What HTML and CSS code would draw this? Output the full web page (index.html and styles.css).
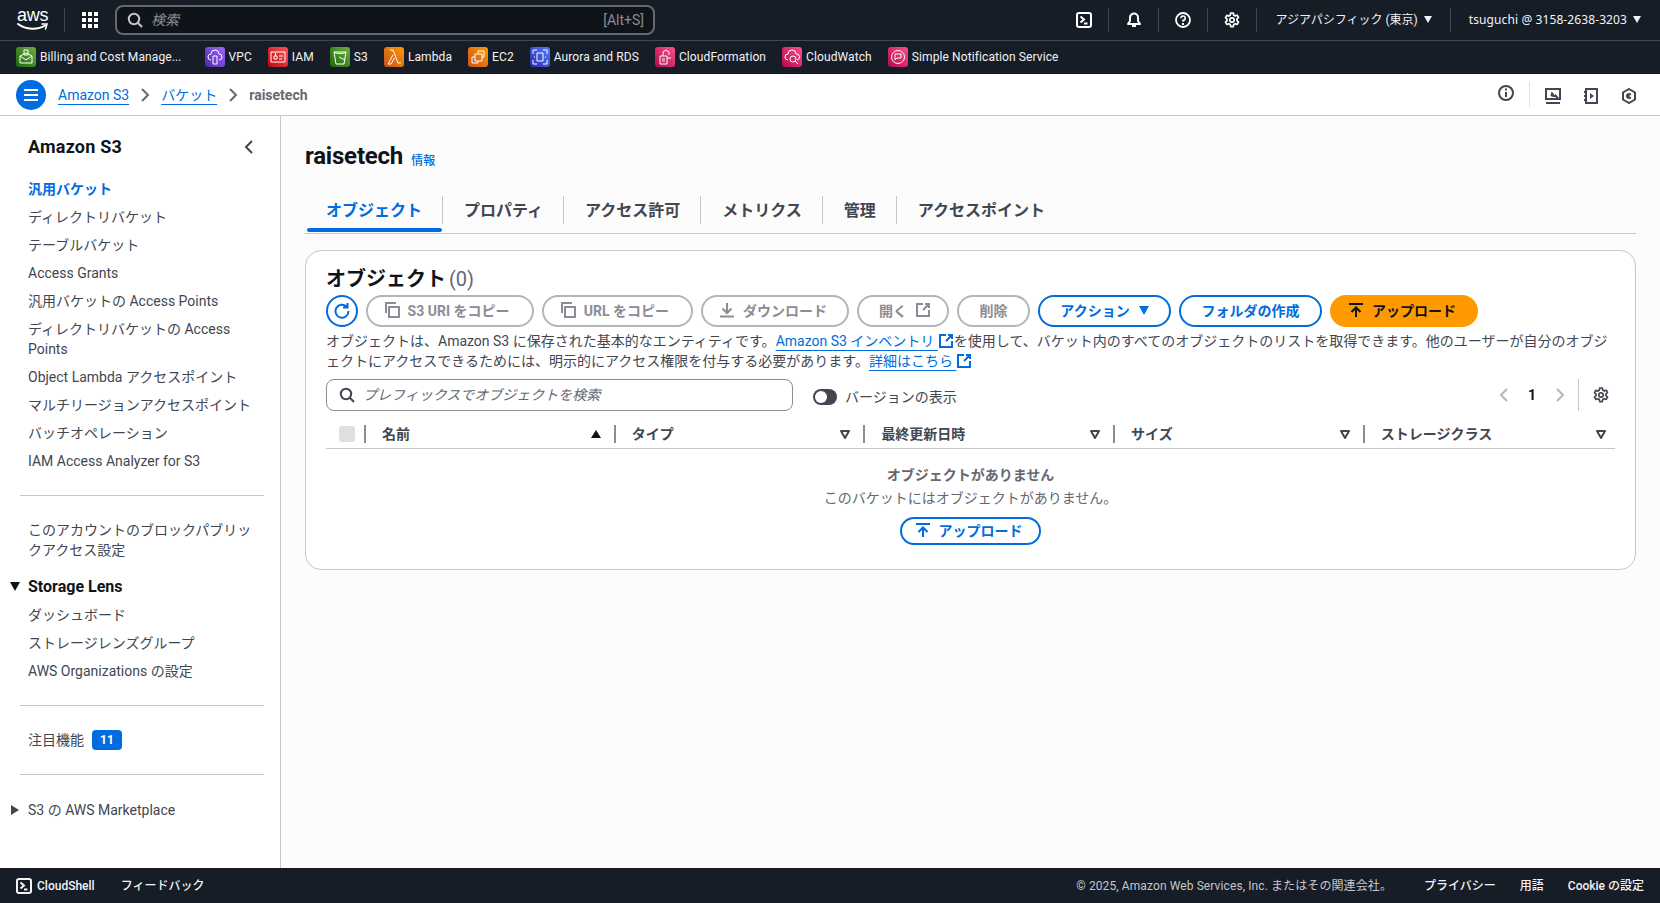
FILE: index.html
```html
<!DOCTYPE html>
<html lang="ja">
<head>
    <meta charset="UTF-8">
    <title>raisetech - S3 バケット</title>
    <link rel="stylesheet" href="styles.css">
</head>
<body>
    <!-- Shared icons -->
    <svg class="defs" width="0" height="0">
        <symbol id="i-gear" viewBox="0 0 16 16"><path d="M6.700 1h2.600l.4 2 1.500.9 2-.7 1.300 2.300-1.500 1.400v1.800l1.500 1.400-1.300 2.300-2-.7-1.500.9-.4 2H6.700l-.4-2-1.500-.9-2 .7-1.300-2.300 1.500-1.400V7.100L1.500 5.700l1.300-2.300 2 .7 1.500-.9z" fill="none" stroke="currentColor" stroke-width="1.700" stroke-linejoin="round"/><circle cx="8" cy="8" r="2.200" fill="none" stroke="currentColor" stroke-width="1.700"/></symbol>
        <symbol id="i-search" viewBox="0 0 16 16"><circle cx="7" cy="7" r="5.200" fill="none" stroke="currentColor" stroke-width="2"/><path d="M10.800 10.800 15 15" stroke="currentColor" stroke-width="2" fill="none"/></symbol>
        <symbol id="i-copy" viewBox="0 0 16 16"><path d="M5 5h10v10H5zM2 11V1h10" fill="none" stroke="currentColor" stroke-width="2"/></symbol>
        <symbol id="i-ext" viewBox="0 0 16 16"><path d="M8 2H2v12h12V8M10 2h4v4M14 2 8 8" fill="none" stroke="currentColor" stroke-width="2"/></symbol>
        <symbol id="i-upload" viewBox="0 0 16 16"><path d="M1 2h14" stroke="currentColor" stroke-width="2"/><path d="M8 15V6M3.500 10 8 5.500l4.500 4.500" fill="none" stroke="currentColor" stroke-width="2"/></symbol>
        <symbol id="i-download" viewBox="0 0 16 16"><path d="M1 14.500h14" stroke="currentColor" stroke-width="2"/><path d="M8 1v9M3.500 6.500 8 11l4.500-4.500" fill="none" stroke="currentColor" stroke-width="2"/></symbol>
        <symbol id="i-shell" viewBox="0 0 16 16"><rect x="1" y="1" width="14" height="14" rx="2" fill="none" stroke="currentColor" stroke-width="2"/><path d="m4.500 4.500 3.500 3-3.500 3M8 11.500h3.500" fill="none" stroke="currentColor" stroke-width="2"/></symbol>
        <symbol id="i-sort" viewBox="0 0 12 12"><path d="M2 3h8L6 10z" fill="none" stroke="currentColor" stroke-width="2" stroke-linejoin="round"/></symbol>
        <symbol id="i-crumb" viewBox="0 0 16 16"><path d="m5 2 6 6-6 6" fill="none" stroke="currentColor" stroke-width="2"/></symbol>
    </svg>

    <!-- Top navigation -->
    <header class="topnav">
        <div class="aws-logo">
            <span class="aws-word">aws</span>
            <svg width="32" height="8" viewBox="0 0 32 8"><path d="M1 1c8 6 20 6 27 1.500" fill="none" stroke="#fff" stroke-width="2" stroke-linecap="round"/><path d="M25 1h5l-1.500 5" fill="none" stroke="#fff" stroke-width="1.600" stroke-linecap="round"/></svg>
        </div>
        <span class="nav-sep logo-sep"></span>
        <svg class="apps" width="16" height="16" viewBox="0 0 16 16" fill="#fff"><path d="M0 0h4v4H0zM6 0h4v4H6zM12 0h4v4h-4zM0 6h4v4H0zM6 6h4v4H6zM12 6h4v4h-4zM0 12h4v4H0zM6 12h4v4H6zM12 12h4v4h-4z"/></svg>
        <div class="global-search">
            <svg class="ico16" viewBox="0 0 16 16"><use href="#i-search"/></svg>
            <span class="global-ph">検索</span>
            <span class="global-key">[Alt+S]</span>
        </div>
        <div class="nav-right">
            <svg class="ico16 nav-ico" viewBox="0 0 16 16"><use href="#i-shell"/></svg>
            <span class="nav-sep"></span>
            <svg class="ico16 nav-ico" viewBox="0 0 16 16"><path d="M8 1.500a4 4 0 0 1 4 4V9l2 3H2l2-3V5.500a4 4 0 0 1 4-4zM6 14h4" fill="none" stroke="currentColor" stroke-width="2" stroke-linejoin="round"/></svg>
            <span class="nav-sep"></span>
            <svg class="ico16 nav-ico" viewBox="0 0 16 16"><circle cx="8" cy="8" r="7" fill="none" stroke="currentColor" stroke-width="1.800"/><path d="M5.800 6.200A2.200 2.200 0 1 1 8 8.400v1.400" fill="none" stroke="currentColor" stroke-width="1.600"/><path d="M7 11h2v2H7z" fill="currentColor"/></svg>
            <span class="nav-sep"></span>
            <svg class="ico16 nav-ico" viewBox="0 0 16 16"><use href="#i-gear"/></svg>
            <span class="nav-sep"></span>
            <span class="nav-text region">アジアパシフィック (東京)<i class="caret"></i></span>
            <span class="nav-sep"></span>
            <span class="nav-text account">tsuguchi @ 3158-2638-3203<i class="caret"></i></span>
        </div>
    </header>

    <!-- Favorites -->
    <nav class="favbar">
        <a class="fav fav-wide"><svg class="svc g-green" viewBox="0 0 20 20"><path d="M4 9v7h12V9L10 13zM4 9l6-3 6 3M8 3h4v5H8z" fill="none" stroke="#fff"/></svg>Billing and Cost Manage...</a>
        <a class="fav"><svg class="svc g-purple" viewBox="0 0 20 20"><path d="M6 13a3 3 0 0 1 0-6 4 4 0 0 1 8 0 3 3 0 0 1 0 6M8 9h4v8H8z" fill="none" stroke="#fff"/></svg>VPC</a>
        <a class="fav"><svg class="svc g-red" viewBox="0 0 20 20"><path d="M3 5h14v10H3zM6 9h3v3H6zM7.500 6v3M11 9h4M11 12h3" fill="none" stroke="#fff"/></svg>IAM</a>
        <a class="fav"><svg class="svc g-green" viewBox="0 0 20 20"><path d="M4 5h12l-2 12H6zM4 5c2 2 10 2 12 0M9 10l6 3" fill="none" stroke="#fff"/></svg>S3</a>
        <a class="fav"><svg class="svc g-orange" viewBox="0 0 20 20"><path d="M6 3h3l5 13h3M9 8l-5 9h3l3.500-6" fill="none" stroke="#fff"/></svg>Lambda</a>
        <a class="fav"><svg class="svc g-orange" viewBox="0 0 20 20"><path d="M7 7h7v7H7zM10 7V4h6v6h-2M7 10H4v6h6v-2" fill="none" stroke="#fff"/></svg>EC2</a>
        <a class="fav"><svg class="svc g-blue" viewBox="0 0 20 20"><path d="M7 6h6v8H7zM3 7V3h4M13 3h4v4M17 13v4h-4M7 17H3v-4M4 10h1M15 10h1" fill="none" stroke="#fff"/></svg>Aurora and RDS</a>
        <a class="fav"><svg class="svc g-pink" viewBox="0 0 20 20"><path d="M5 9h7v8H5zM8 9V5l3-2 3 2v3M12 11h4M7 12h3M7 14h3" fill="none" stroke="#fff"/></svg>CloudFormation</a>
        <a class="fav"><svg class="svc g-pink" viewBox="0 0 20 20"><path d="M6 13a3 3 0 0 1 0-6 4 4 0 0 1 8 0 3 3 0 0 1 1 6" fill="none" stroke="#fff"/><circle cx="11" cy="12" r="3" fill="none" stroke="#fff"/><path d="m13 14 3 3" stroke="#fff"/></svg>CloudWatch</a>
        <a class="fav"><svg class="svc g-pink" viewBox="0 0 20 20"><circle cx="10" cy="10" r="6.500" fill="none" stroke="#fff"/><path d="M7 7h6v4H9l-2 2z" fill="none" stroke="#fff"/></svg>Simple Notification Service</a>
    </nav>

    <!-- Breadcrumbs -->
    <div class="crumbbar">
        <button class="burger"><span></span><span></span><span></span></button>
        <a class="link crumb-first">Amazon S3</a>
        <svg class="crumb-sep" viewBox="0 0 16 16"><use href="#i-crumb"/></svg>
        <a class="link">バケット</a>
        <svg class="crumb-sep" viewBox="0 0 16 16"><use href="#i-crumb"/></svg>
        <span class="crumb-now">raisetech</span>
        <div class="crumb-tools">
            <svg class="ico16 tool-info" viewBox="0 0 16 16"><circle cx="8" cy="8" r="7" fill="none" stroke="currentColor" stroke-width="2"/><path d="M7 7h2v5H7zM7 3.500h2v2H7z" fill="currentColor"/></svg>
            <span class="tool-sep"></span>
            <svg class="ico16 tool-first" viewBox="0 0 16 16"><path d="M1 11V1h14v10zM1 15h14M6 8l2.500-2.500M7.500 4.500a2 2 0 0 0 3 3l2.500 3" fill="none" stroke="currentColor" stroke-width="2"/></svg>
            <svg class="ico16 tool" viewBox="0 0 16 16"><path d="M3 1h11v14H3zM1 4h3M1 8h3M1 12h3" fill="none" stroke="currentColor" stroke-width="2"/><path d="M7 5v6l4-3z" fill="currentColor"/></svg>
            <svg class="ico16 tool" viewBox="0 0 16 16"><path d="m8 1 6 3.500v7L8 15l-6-3.500v-7z" fill="none" stroke="currentColor" stroke-width="2"/><path d="M10.500 6.500A3 3 0 1 0 10.500 9.500L8 8z" fill="currentColor"/></svg>
        </div>
    </div>

    <div class="layout">
        <!-- Side navigation -->
        <aside class="sidenav">
            <div class="side-head">
                <h2>Amazon S3</h2>
                <svg class="side-close" viewBox="0 0 16 16"><path d="m11 2-6 6 6 6" fill="none" stroke="currentColor" stroke-width="2"/></svg>
            </div>
            <ul class="side-list">
                <li class="active">汎用バケット</li>
                <li>ディレクトリバケット</li>
                <li>テーブルバケット</li>
                <li>Access Grants</li>
                <li>汎用バケットの Access Points</li>
                <li>ディレクトリバケットの Access Points</li>
                <li>Object Lambda アクセスポイント</li>
                <li>マルチリージョンアクセスポイント</li>
                <li>バッチオペレーション</li>
                <li>IAM Access Analyzer for S3</li>
            </ul>
            <hr class="side-div first-div">
            <ul class="side-list">
                <li>このアカウントのブロックパブリックアクセス設定</li>
            </ul>
            <div class="side-group"><i class="tri-down"></i>Storage Lens</div>
            <ul class="side-list group-list">
                <li>ダッシュボード</li>
                <li>ストレージレンズグループ</li>
                <li>AWS Organizations の設定</li>
            </ul>
            <hr class="side-div">
            <div class="side-feature">注目機能<span class="badge">11</span></div>
            <hr class="side-div feature-div">
            <div class="side-market"><i class="tri-right"></i>S3 の AWS Marketplace</div>
        </aside>

        <main class="content">
            <div class="page-title">
                <h1>raisetech</h1>
                <a class="info-link">情報</a>
            </div>

            <div class="tabs">
                <a class="tab active">オブジェクト</a>
                <a class="tab">プロパティ</a>
                <a class="tab">アクセス許可</a>
                <a class="tab">メトリクス</a>
                <a class="tab">管理</a>
                <a class="tab last">アクセスポイント</a>
            </div>

            <section class="card">
                <h2 class="card-title">オブジェクト <span class="count">(0)</span></h2>
                <div class="actions">
                    <button class="btn-round"><svg class="ico16" viewBox="0 0 16 16"><path d="M12.500 3.500A6.500 6.500 0 1 0 14.500 8M9 4.500h4.500V0" fill="none" stroke="currentColor" stroke-width="2"/></svg></button>
                    <button class="btn off btn-s3"><svg class="ico16" viewBox="0 0 16 16"><use href="#i-copy"/></svg>S3 URI をコピー</button>
                    <button class="btn off btn-url"><svg class="ico16" viewBox="0 0 16 16"><use href="#i-copy"/></svg>URL をコピー</button>
                    <button class="btn off btn-dl"><svg class="ico16" viewBox="0 0 16 16"><use href="#i-download"/></svg>ダウンロード</button>
                    <button class="btn off btn-open">開く<svg class="ico16" viewBox="0 0 16 16"><use href="#i-ext"/></svg></button>
                    <button class="btn off btn-del">削除</button>
                    <button class="btn blue btn-act">アクション<i class="caret big"></i></button>
                    <button class="btn blue btn-folder">フォルダの作成</button>
                    <button class="btn primary btn-up"><svg class="ico16" viewBox="0 0 16 16"><use href="#i-upload"/></svg>アップロード</button>
                </div>
                <p class="desc">オブジェクトは、Amazon S3 に保存された基本的なエンティティです。<a class="link">Amazon S3 インベントリ </a><svg class="ico16 ext" viewBox="0 0 16 16"><use href="#i-ext"/></svg>を使用して、バケット内のすべてのオブジェクトのリストを取得できます。他のユーザーが自分のオブジェクトにアクセスできるためには、明示的にアクセス権限を付与する必要があります。<a class="link">詳細はこちら </a><svg class="ico16 ext" viewBox="0 0 16 16"><use href="#i-ext"/></svg></p>

                <div class="filter-row">
                    <div class="filter">
                        <svg class="ico16" viewBox="0 0 16 16"><use href="#i-search"/></svg>
                        <span>プレフィックスでオブジェクトを検索</span>
                    </div>
                    <div class="toggle"><span class="knob"></span></div>
                    <span class="toggle-label">バージョンの表示</span>
                    <div class="pager">
                        <svg class="pager-arrow" viewBox="0 0 16 16"><path d="m11 2-6 6 6 6" fill="none" stroke="currentColor" stroke-width="2"/></svg>
                        <span class="pager-num">1</span>
                        <svg class="pager-arrow" viewBox="0 0 16 16"><path d="m5 2 6 6-6 6" fill="none" stroke="currentColor" stroke-width="2"/></svg>
                        <span class="pager-sep"></span>
                        <svg class="ico16 pager-gear" viewBox="0 0 16 16"><use href="#i-gear"/></svg>
                    </div>
                </div>

                <div class="thead">
                    <div class="th th-check"><span class="checkbox"></span></div>
                    <div class="th">名前<svg class="sort" viewBox="0 0 12 12"><path d="M1 10 6 2l5 8z" fill="#0f141a"/></svg></div>
                    <div class="th">タイプ<svg class="sort" viewBox="0 0 12 12"><use href="#i-sort"/></svg></div>
                    <div class="th">最終更新日時<svg class="sort" viewBox="0 0 12 12"><use href="#i-sort"/></svg></div>
                    <div class="th">サイズ<svg class="sort" viewBox="0 0 12 12"><use href="#i-sort"/></svg></div>
                    <div class="th">ストレージクラス<svg class="sort" viewBox="0 0 12 12"><use href="#i-sort"/></svg></div>
                </div>

                <div class="empty">
                    <strong>オブジェクトがありません</strong>
                    <p>このバケットにはオブジェクトがありません。</p>
                    <button class="btn blue btn-small"><svg class="ico16" viewBox="0 0 16 16"><use href="#i-upload"/></svg>アップロード</button>
                </div>
            </section>
        </main>
    </div>

    <!-- Footer -->
    <footer class="footer">
        <svg class="ico16" viewBox="0 0 16 16"><use href="#i-shell"/></svg>
        <span class="foot-shell">CloudShell</span>
        <span class="foot-feedback">フィードバック</span>
        <span class="foot-copy">© 2025, Amazon Web Services, Inc. またはその関連会社。</span>
        <span class="foot-link">プライバシー</span>
        <span class="foot-link">用語</span>
        <span class="foot-link">Cookie の設定</span>
    </footer>
</body>
</html>
```

FILE: styles.css
```css
* {
    box-sizing: border-box;
}
html, body {
    height: 100%;
}
body {
    margin: 0;
    display: flex;
    flex-direction: column;
    height: 903px;
    overflow: hidden;
    font-family: Roboto, "Noto Sans CJK JP", sans-serif;
    font-size: 14px;
    line-height: 20px;
    color: #424650;
    background-color: #fcfcfc;
}
a {
    color: inherit;
}
ul {
    list-style: none;
    margin: 0;
    padding: 0;
}
button {
    font-family: inherit;
}
.defs {
    position: absolute;
}
.ico16 {
    width: 16px;
    height: 16px;
    flex: none;
}
.link {
    color: #006ce0;
    text-decoration: underline;
    text-underline-offset: 4px;
}
.caret {
    display: inline-block;
    width: 0;
    height: 0;
    margin-left: 6px;
    border-left: 4px solid transparent;
    border-right: 4px solid transparent;
    border-top: 7px solid currentColor;
    vertical-align: 1px;
}

/* top nav */
.topnav {
    display: flex;
    align-items: center;
    height: 41px;
    padding-left: 17px;
    background-color: #161d26;
    border-bottom: 1px solid #424650;
    color: #fff;
}
.aws-logo {
    display: flex;
    flex-direction: column;
    width: 32px;
    margin-top: -2px;
}
.aws-word {
    font-family: "Liberation Sans", sans-serif;
    font-size: 18px;
    line-height: 14px;
    letter-spacing: -0.3px;
}
.aws-logo svg {
    margin-top: 1px;
}
.nav-sep {
    width: 1px;
    height: 24px;
    background-color: #424650;
}
.logo-sep {
    margin-left: 15px;
}
.apps {
    margin-left: 17px;
}
.global-search {
    display: flex;
    align-items: center;
    width: 540px;
    height: 30px;
    margin-left: 17px;
    padding: 0 9px 0 10px;
    background-color: #0f141a;
    border: 2px solid #656871;
    border-radius: 8px;
    color: #c6c6cd;
}
.global-ph {
    margin-left: 8px;
    font-style: italic;
    color: #8c8c94;
}
.global-key {
    margin-left: auto;
    color: #8c8c94;
}
.nav-right {
    display: flex;
    align-items: center;
    margin-left: auto;
    padding-right: 19px;
}
.nav-ico {
    margin: 0 16.2px;
    color: #fff;
}
.nav-text {
    font-size: 12px;
    white-space: nowrap;
    color: #f3f3f7;
}
.region {
    margin: 0 18px 0 18px;
}
.account {
    margin-left: 18px;
    letter-spacing: 0.1px;
    font-family: "Noto Sans", "Noto Sans CJK JP", sans-serif;
}

/* favorites */
.favbar {
    display: flex;
    align-items: center;
    height: 33px;
    padding-left: 16px;
    gap: 16px;
    background-color: #161d26;
    border-bottom: 1px solid #0f141a;
}
.fav {
    display: flex;
    align-items: center;
    gap: 4px;
    font-size: 12px;
    letter-spacing: 0.1px;
    white-space: nowrap;
    color: #f3f3f7;
}
.fav-wide {
    margin-right: 7px;
}
.svc {
    width: 20px;
    height: 20px;
    border-radius: 3px;
}
.g-green { background: linear-gradient(45deg, #1b660f, #6cae3e); }
.g-purple { background: linear-gradient(45deg, #4d27a8, #a166ff); }
.g-red { background: linear-gradient(45deg, #bd0816, #ff5252); }
.g-orange { background: linear-gradient(45deg, #c8511b, #ff9900); }
.g-blue { background: linear-gradient(45deg, #2e27ad, #527fff); }
.g-pink { background: linear-gradient(45deg, #b0084d, #ff4f8b); }

/* breadcrumbs */
.crumbbar {
    display: flex;
    align-items: center;
    height: 42px;
    padding-left: 16px;
    background-color: #fff;
    border-bottom: 1px solid #c6c6cd;
}
.burger {
    display: flex;
    flex-direction: column;
    align-items: center;
    justify-content: center;
    gap: 3px;
    width: 30px;
    height: 30px;
    padding: 0;
    border: 0;
    border-radius: 50%;
    background-color: #006ce0;
}
.burger span {
    width: 14px;
    height: 2px;
    background-color: #fff;
}
.crumb-first {
    margin-left: 12px;
}
.crumb-sep {
    width: 16px;
    height: 16px;
    margin: 0 8px;
    color: #656871;
}
.crumb-now {
    font-weight: 700;
    color: #656871;
}
.crumb-tools {
    display: flex;
    align-items: center;
    margin-left: auto;
    padding-right: 23px;
    color: #424650;
}
.tool-info {
    margin-top: -4px;
}
.tool-sep {
    width: 1px;
    height: 25px;
    margin: 0 15px 0 15px;
    background-color: #dedee3;
}
.tool-first {
    margin-top: 2px;
}
.tool {
    margin-top: 2px;
    margin-left: 22px;
}

/* layout */
.layout {
    flex: 1;
    display: flex;
    min-height: 0;
}
.sidenav {
    width: 281px;
    flex: none;
    padding-top: 21px;
    background-color: #fff;
    border-right: 1px solid #c6c6cd;
}
.side-head {
    display: flex;
    align-items: center;
    justify-content: space-between;
    padding: 0 23px 0 28px;
    height: 20px;
}
.side-head h2 {
    margin: 0;
    font-size: 18px;
    font-weight: 700;
    letter-spacing: 0.2px;
    color: #0f141a;
}
.side-close {
    width: 16px;
    height: 16px;
    color: #424650;
}
.side-list {
    margin-top: 22px;
    padding: 0 20px 0 28px;
}
.side-list li {
    margin-bottom: 8px;
}
.side-list li.active {
    font-weight: 700;
    color: #006ce0;
}
.side-div {
    margin: 14px 16px 0 20px;
    border: 0;
    border-top: 1px solid #c6c6cd;
}
.first-div {
    margin-top: 24px;
}
.first-div + .side-list {
    margin-top: 24px;
}
.side-group {
    position: relative;
    margin-top: 17px;
    padding-left: 28px;
    font-size: 16px;
    font-weight: 700;
    color: #0f141a;
}
.tri-down {
    position: absolute;
    left: 10px;
    top: 5px;
    border-left: 5px solid transparent;
    border-right: 5px solid transparent;
    border-top: 9px solid #0f141a;
}
.tri-right {
    position: absolute;
    left: 11px;
    top: 5px;
    border-top: 5px solid transparent;
    border-bottom: 5px solid transparent;
    border-left: 8px solid #424650;
}
.group-list {
    margin-top: 8px;
}
.group-list + .side-div {
    margin-top: 24px;
}
.side-feature {
    display: flex;
    align-items: center;
    height: 20px;
    margin-top: 24px;
    padding-left: 28px;
}
.badge {
    width: 30px;
    height: 20px;
    margin-left: 8px;
    border-radius: 4px;
    background-color: #006ce0;
    color: #fff;
    font-size: 12px;
    font-weight: 700;
    text-align: center;
}
.feature-div {
    margin-top: 24px;
}
.side-market {
    position: relative;
    margin-top: 25px;
    padding-left: 28px;
}

/* main */
.content {
    flex: 1;
    min-width: 0;
    padding: 24px 24px 0 24px;
}
.page-title {
    display: flex;
    align-items: baseline;
    height: 32px;
}
.page-title h1 {
    margin: 0;
    font-size: 24px;
    line-height: 32px;
    font-weight: 700;
    letter-spacing: -0.2px;
    color: #0f141a;
}
.info-link {
    position: relative;
    top: 1px;
    margin-left: 8px;
    font-size: 12px;
    font-weight: 500;
    color: #006ce0;
}
.tabs {
    display: flex;
    margin-top: 16px;
    padding: 8px 0 0 1px;
    height: 46px;
    border-bottom: 1px solid #c6c6cd;
}
.tab {
    position: relative;
    height: 28px;
    padding: 3px 20px 1px 21px;
    font-size: 16px;
    line-height: 24px;
    font-weight: 700;
    border-right: 1px solid #c6c6cd;
    color: #424650;
}
.tab.last {
    border-right: 0;
}
.tab.active {
    padding-left: 19px;
    margin-left: 1px;
    color: #006ce0;
}
.tab.active::after {
    content: "";
    position: absolute;
    left: 0;
    right: 0;
    bottom: -8px;
    height: 4px;
    border-radius: 2px;
    background-color: #006ce0;
}
.card {
    margin-top: 16px;
    height: 320px;
    padding: 15px 20px 0 20px;
    background-color: #fff;
    border: 1px solid #c6c6cd;
    border-radius: 16px;
}
.card-title {
    margin: 0;
    font-size: 20px;
    line-height: 26px;
    font-weight: 700;
    color: #0f141a;
}
.count {
    margin-left: -2px;
    font-weight: 400;
    color: #656871;
}
.actions {
    display: flex;
    gap: 8px;
    margin-top: 3px;
}
.btn-round {
    display: flex;
    align-items: center;
    justify-content: center;
    width: 32px;
    height: 32px;
    padding: 0;
    border: 2px solid #006ce0;
    border-radius: 50%;
    background-color: #fff;
    color: #006ce0;
}
.btn {
    display: flex;
    align-items: center;
    justify-content: center;
    gap: 8px;
    height: 32px;
    padding: 0 0 2px 0;
    border: 2px solid #006ce0;
    border-radius: 20px;
    background-color: #fff;
    color: #006ce0;
    font-size: 14px;
    font-weight: 700;
    white-space: nowrap;
}
.btn.off {
    border-color: #b4b4bb;
    color: #8c8c94;
}
.btn.primary {
    border-color: #ff9900;
    background-color: #ff9900;
    color: #0f141a;
}
.btn-s3 { width: 168px; padding-right: 7px; }
.btn-url { width: 151px; padding-right: 6px; }
.btn-dl { width: 148px; padding-right: 4px; }
.btn-open { width: 92px; padding-left: 4px; }
.btn-del { width: 73px; }
.btn-act { width: 133px; }
.btn-folder { width: 143px; }
.btn-up { width: 148px; padding-right: 4px; }
.caret.big {
    margin-left: 1px;
    border-left-width: 5px;
    border-right-width: 5px;
    border-top-width: 9px;
}
.desc {
    margin: 4px 0 0 0;
    color: #424650;
}
.ext {
    vertical-align: -3px;
    color: #006ce0;
}
.filter-row {
    display: flex;
    align-items: center;
    height: 32px;
    margin-top: 8px;
}
.filter {
    display: flex;
    align-items: center;
    gap: 8px;
    width: 467px;
    height: 32px;
    padding: 0 12px;
    border: 1px solid #8c8c94;
    border-radius: 8px;
    color: #424650;
}
.filter span {
    font-style: italic;
    color: #656871;
}
.toggle {
    width: 24px;
    height: 16px;
    margin: 4px 0 0 20px;
    padding: 2px;
    border-radius: 8px;
    background-color: #424650;
}
.knob {
    display: block;
    width: 12px;
    height: 12px;
    border-radius: 50%;
    background-color: #fff;
}
.toggle-label {
    margin: 4px 0 0 8px;
}
.pager {
    display: flex;
    align-items: center;
    height: 32px;
    margin-left: auto;
    padding-right: 6px;
}
.pager-arrow {
    width: 16px;
    height: 16px;
    color: #b4b4bb;
}
.pager-num {
    margin: 0 16px;
    font-weight: 700;
    color: #0f141a;
}
.pager-sep {
    width: 1px;
    height: 32px;
    margin: 0 14px 0 10px;
    background-color: #c6c6cd;
}
.pager-gear {
    color: #424650;
}
.thead {
    display: grid;
    grid-template-columns: 38px repeat(5, 249.7px);
    height: 26px;
    margin-top: 12px;
    padding-top: 2px;
    border-bottom: 1px solid #c6c6cd;
}
.th {
    display: flex;
    align-items: center;
    justify-content: space-between;
    height: 18px;
    padding: 0 0 0 16px;
    font-weight: 700;
    color: #424650;
    border-left: 2px solid #8c8c94;
}
.th:first-child {
    border-left: 0;
    padding-left: 13px;
}
.th:last-child .sort {
    margin-right: 5px;
}
.sort {
    width: 12px;
    height: 12px;
    margin-right: 12px;
    color: #424650;
}
.checkbox {
    width: 16px;
    height: 16px;
    border-radius: 3px;
    background-color: #dedee3;
}
.empty {
    display: flex;
    flex-direction: column;
    align-items: center;
    margin-top: 16px;
    color: #656871;
}
.empty strong {
    font-weight: 700;
}
.empty p {
    margin: 3px 0 0 0;
}
.btn-small {
    width: 141px;
    height: 28px;
    margin-top: 9px;
    padding-right: 4px;
}

/* footer */
.footer {
    display: flex;
    align-items: center;
    height: 35px;
    padding: 0 16px 0 16px;
    background-color: #161d26;
    color: #f3f3f7;
    font-size: 12px;
}
.foot-shell {
    margin-left: 5px;
    font-weight: 500;
}
.foot-feedback {
    margin-left: 26px;
    font-weight: 500;
}
.foot-copy {
    margin-left: auto;
    margin-right: 8px;
    letter-spacing: 0.1px;
    color: #c6c6cd;
}
.foot-link {
    margin-left: 24px;
    font-weight: 500;
}
```
